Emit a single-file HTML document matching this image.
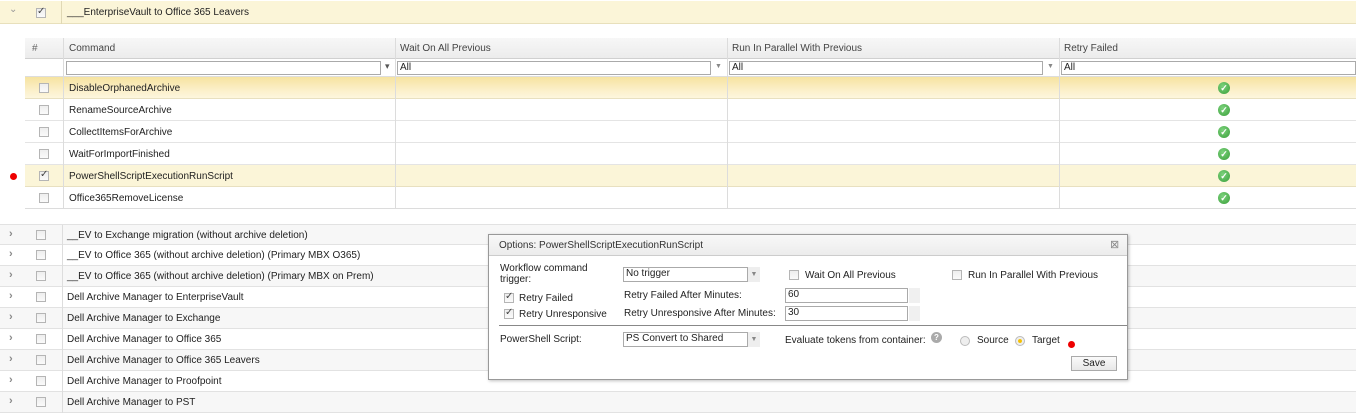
<!DOCTYPE html>
<html><head><style>
*{box-sizing:border-box;margin:0;padding:0}
body{width:1360px;height:414px;overflow:hidden;background:#fff;font-family:"Liberation Sans",sans-serif;font-size:10px;color:#222;position:relative}
.a{position:absolute}
.cb{position:absolute;width:10px;height:10px;border:1px solid #b5b5b5;background:linear-gradient(#eee,#fafafa)}
.cb.c::after{content:"✓";position:absolute;left:0px;top:-3px;font-size:10px;color:#444}
.row{position:absolute;left:0;width:1356px;height:21px;border-bottom:1px solid #e2e2e2}
.row .t{position:absolute;left:67px;top:5px}
.row .ar{position:absolute;left:9px;top:3px;font-size:11px;color:#888;font-weight:bold}
.row .vl{position:absolute;left:62px;top:0;height:21px;border-left:1px solid #ddd}
.g{background:#f7f7f7}
.ok{position:absolute;width:12px;height:12px;border-radius:50%;background:radial-gradient(circle at 40% 35%,#7cd27c,#3a9f3a);color:#fff;font-size:9px;line-height:12px;text-align:center;font-weight:bold}
.inp{position:absolute;border:1px solid #aaa;background:#fff;height:14px;font-size:10px;padding-left:2px;line-height:12px}
</style></head><body>
<div class="a" style="left:0;top:1px;width:1356px;height:23px;background:#fbf5d8;border-bottom:1px solid #e8e0bc"></div>
<div class="a" style="left:9px;top:4px;font-size:10px;color:#999">⌄</div>
<div class="cb c" style="left:36px;top:8px"></div>
<div class="a" style="left:61px;top:1px;height:23px;border-left:1px solid #e0d8b4"></div>
<div class="a" style="left:67px;top:7px">___EnterpriseVault to Office 365 Leavers</div>

<div class="a" style="left:25px;top:38px;width:1331px;height:21px;background:linear-gradient(#f7f7f7,#ececec);border-bottom:1px solid #d0d0d0"></div>
<div class="a" style="left:32px;top:43px;color:#666">#</div>
<div class="a" style="left:69px;top:43px;color:#444">Command</div>
<div class="a" style="left:400px;top:43px;color:#444">Wait On All Previous</div>
<div class="a" style="left:732px;top:43px;color:#444">Run In Parallel With Previous</div>
<div class="a" style="left:1064px;top:43px;color:#444">Retry Failed</div>
<div class="a" style="left:25px;top:59px;width:1331px;height:18px;background:#fff;border-bottom:1px solid #ddd"></div>
<div class="inp" style="left:66px;top:61px;width:315px"></div>
<div class="a" style="left:385px;top:61px;font-size:9px;color:#555">▾</div>
<div class="inp" style="left:397px;top:61px;width:314px">All</div><div class="a" style="left:715px;top:63px;font-size:7px;color:#888">▼</div>
<div class="inp" style="left:729px;top:61px;width:314px">All</div><div class="a" style="left:1047px;top:63px;font-size:7px;color:#888">▼</div>
<div class="inp" style="left:1061px;top:61px;width:295px">All</div>
<div class="a" style="left:25px;top:77px;width:1331px;height:22px;background:linear-gradient(#f6e3a0,#fbefc8 60%,#fdf6de);border-bottom:1px solid #e8e0c0"></div>
<div class="a" style="left:25px;top:99px;width:1331px;height:22px;border-bottom:1px solid #e4e4e4"></div>
<div class="a" style="left:25px;top:121px;width:1331px;height:22px;border-bottom:1px solid #e4e4e4"></div>
<div class="a" style="left:25px;top:143px;width:1331px;height:22px;border-bottom:1px solid #e4e4e4"></div>
<div class="a" style="left:25px;top:165px;width:1331px;height:22px;background:#fbf5d8;border-bottom:1px solid #e8e0c0"></div>
<div class="a" style="left:25px;top:187px;width:1331px;height:22px;border-bottom:1px solid #dcdcdc"></div>
<div class="a" style="left:63px;top:38px;height:171px;border-left:1px solid #dcdcdc"></div>
<div class="a" style="left:395px;top:38px;height:171px;border-left:1px solid #dcdcdc"></div>
<div class="a" style="left:727px;top:38px;height:171px;border-left:1px solid #dcdcdc"></div>
<div class="a" style="left:1059px;top:38px;height:171px;border-left:1px solid #dcdcdc"></div>

<div class="cb" style="left:39px;top:83px"></div><div class="a" style="left:69px;top:83px">DisableOrphanedArchive</div>
<div class="cb" style="left:39px;top:105px"></div><div class="a" style="left:69px;top:105px">RenameSourceArchive</div>
<div class="cb" style="left:39px;top:127px"></div><div class="a" style="left:69px;top:127px">CollectItemsForArchive</div>
<div class="cb" style="left:39px;top:149px"></div><div class="a" style="left:69px;top:149px">WaitForImportFinished</div>
<div class="cb c" style="left:39px;top:171px"></div><div class="a" style="left:69px;top:171px">PowerShellScriptExecutionRunScript</div>
<div class="cb" style="left:39px;top:193px"></div><div class="a" style="left:69px;top:193px">Office365RemoveLicense</div>
<div class="a" style="left:10px;top:173px;width:7px;height:7px;border-radius:50%;background:#e00"></div>
<div class="ok" style="left:1218px;top:82px">✓</div>
<div class="ok" style="left:1218px;top:104px">✓</div>
<div class="ok" style="left:1218px;top:126px">✓</div>
<div class="ok" style="left:1218px;top:148px">✓</div>
<div class="ok" style="left:1218px;top:170px">✓</div>
<div class="ok" style="left:1218px;top:192px">✓</div>

<div class="row g" style="top:224px;border-top:1px solid #e2e2e2"><span class="ar">›</span><div class="cb" style="left:36px;top:5px"></div><span class="vl"></span><span class="t">__EV to Exchange migration (without archive deletion)</span></div>
<div class="row" style="top:245px"><span class="ar">›</span><div class="cb" style="left:36px;top:5px"></div><span class="vl"></span><span class="t">__EV to Office 365 (without archive deletion) (Primary MBX O365)</span></div>
<div class="row g" style="top:266px"><span class="ar">›</span><div class="cb" style="left:36px;top:5px"></div><span class="vl"></span><span class="t">__EV to Office 365 (without archive deletion) (Primary MBX on Prem)</span></div>
<div class="row" style="top:287px"><span class="ar">›</span><div class="cb" style="left:36px;top:5px"></div><span class="vl"></span><span class="t">Dell Archive Manager to EnterpriseVault</span></div>
<div class="row g" style="top:308px"><span class="ar">›</span><div class="cb" style="left:36px;top:5px"></div><span class="vl"></span><span class="t">Dell Archive Manager to Exchange</span></div>
<div class="row" style="top:329px"><span class="ar">›</span><div class="cb" style="left:36px;top:5px"></div><span class="vl"></span><span class="t">Dell Archive Manager to Office 365</span></div>
<div class="row g" style="top:350px"><span class="ar">›</span><div class="cb" style="left:36px;top:5px"></div><span class="vl"></span><span class="t">Dell Archive Manager to Office 365 Leavers</span></div>
<div class="row" style="top:371px"><span class="ar">›</span><div class="cb" style="left:36px;top:5px"></div><span class="vl"></span><span class="t">Dell Archive Manager to Proofpoint</span></div>
<div class="row g" style="top:392px"><span class="ar">›</span><div class="cb" style="left:36px;top:5px"></div><span class="vl"></span><span class="t">Dell Archive Manager to PST</span></div>

<div class="a" style="left:488px;top:234px;width:640px;height:146px;background:#fff;border:1px solid #999;box-shadow:1px 1px 3px rgba(0,0,0,.25)">
  <div class="a" style="left:0;top:0;width:638px;height:21px;background:linear-gradient(#f8f8f8,#ececec);border-bottom:1px solid #ccc"></div>
  <div class="a" style="left:10px;top:5px;color:#333">Options: PowerShellScriptExecutionRunScript</div>
  <div class="a" style="left:621px;top:3px;color:#888;font-size:11px">⊠</div>
  <div class="a" style="left:11px;top:28px;line-height:11px">Workflow command<br>trigger:</div>
  <div class="inp" style="left:134px;top:32px;width:125px;height:15px;color:#222">No trigger</div>
  <div class="a" style="left:259px;top:32px;width:12px;height:15px;background:#eee;font-size:7px;color:#888;text-align:center;line-height:15px">▼</div>
  <div class="cb" style="left:300px;top:35px"></div><div class="a" style="left:316px;top:35px">Wait On All Previous</div>
  <div class="cb" style="left:463px;top:35px"></div><div class="a" style="left:479px;top:35px">Run In Parallel With Previous</div>
  <div class="cb c" style="left:15px;top:58px"></div><div class="a" style="left:30px;top:58px">Retry Failed</div>
  <div class="cb c" style="left:15px;top:74px"></div><div class="a" style="left:30px;top:74px">Retry Unresponsive</div>
  <div class="a" style="left:135px;top:55px">Retry Failed After Minutes:</div>
  <div class="a" style="left:135px;top:73px">Retry Unresponsive After Minutes:</div>
  <div class="inp" style="left:296px;top:53px;width:123px;height:15px">60</div>
  <div class="inp" style="left:296px;top:71px;width:123px;height:15px">30</div>
  <div class="a" style="left:420px;top:53px;width:11px;height:15px;background:#f0f0f0"></div>
  <div class="a" style="left:420px;top:71px;width:11px;height:15px;background:#f0f0f0"></div>
  <div class="a" style="left:10px;top:90px;width:628px;border-top:1px solid #888"></div>
  <div class="a" style="left:11px;top:99px">PowerShell Script:</div>
  <div class="inp" style="left:134px;top:97px;width:125px;height:15px">PS Convert to Shared</div>
  <div class="a" style="left:259px;top:97px;width:12px;height:15px;background:#eee;font-size:7px;color:#888;text-align:center;line-height:15px">▼</div>
  <div class="a" style="left:296px;top:100px">Evaluate tokens from container:</div>
  <div class="a" style="left:442px;top:97px;width:11px;height:11px;border-radius:50%;background:#aaa;color:#fff;font-size:8px;text-align:center;line-height:11px;font-weight:bold">?</div>
  <div class="a" style="left:471px;top:101px;width:10px;height:10px;border-radius:50%;border:1px solid #bbb;background:#eee"></div>
  <div class="a" style="left:488px;top:100px">Source</div>
  <div class="a" style="left:526px;top:101px;width:10px;height:10px;border-radius:50%;border:1px solid #bbb;background:radial-gradient(#f5c000 30%,#eee 40%)"></div>
  <div class="a" style="left:543px;top:100px">Target</div>
  <div class="a" style="left:579px;top:106px;width:7px;height:7px;border-radius:50%;background:#e00"></div>
  <div class="a" style="left:582px;top:121px;width:46px;height:15px;border:1px solid #aaa;background:linear-gradient(#fafafa,#e8e8e8);text-align:center;line-height:13px">Save</div>
</div>
</body></html>
